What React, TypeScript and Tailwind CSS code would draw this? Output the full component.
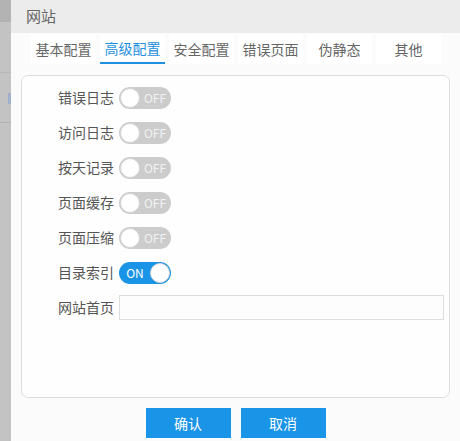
import { useState } from "react";

const tabs = ["基本配置", "高级配置", "安全配置", "错误页面", "伪静态", "其他"];

const switches = [
  { label: "错误日志", on: false },
  { label: "访问日志", on: false },
  { label: "按天记录", on: false },
  { label: "页面缓存", on: false },
  { label: "页面压缩", on: false },
  { label: "目录索引", on: true },
];

function Toggle({ on, onClick }: { on: boolean; onClick: () => void }) {
  return (
    <button
      onClick={onClick}
      className={`flex h-[22px] w-[52px] items-center rounded-full px-[1px] ${
        on ? "flex-row-reverse bg-[#1a94e6]" : "bg-[#cccccc]"
      }`}
    >
      <span className="h-[20px] w-[20px] shrink-0 rounded-full border border-[#d4d4d4] bg-white" />
      <span
        className={`flex-1 text-center text-[12px] leading-none ${
          on ? "text-white" : "text-[#f2f2f2]"
        }`}
      >
        {on ? "ON" : "OFF"}
      </span>
    </button>
  );
}

export default function App() {
  const [active] = useState(1);
  const [state, setState] = useState(switches.map((s) => s.on));

  return (
    <div
      className="flex h-[441px] w-[460px] overflow-hidden bg-[#fbfbfb] text-[14px] text-[#555]"
      style={{ fontFamily: '"Noto Sans CJK SC", "Noto Sans", sans-serif' }}
    >
      {/* backdrop strip on the left */}
      <div className="flex w-[11px] shrink-0 flex-col bg-[#c3c3c3]">
        <div className="h-[22px] bg-[#b3b3b3]" />
        <div className="mt-[50px] h-px bg-[#b8b8b8]" />
        <div className="mt-[20px] ml-[8px] h-[11px] w-[3px] bg-[#9fb0c8]" />
        <div className="mt-[18px] h-px bg-[#b0b0b0]" />
      </div>

      <div className="flex flex-1 flex-col">
        <div className="flex h-[33px] items-center bg-[#ececec] pl-[15px] text-[15px] text-[#666]">
          网站
        </div>

        <div className="flex h-[35px] gap-[4px] pl-[20px] pt-[1px]">
          {tabs.map((t, i) => (
            <div
              key={t}
              className={`flex h-[30px] w-[65px] items-center justify-center bg-white ${
                i === active
                  ? "border-b-2 border-[#1e90e0] text-[#1e90e0]"
                  : "text-[#666]"
              }`}
            >
              {t}
            </div>
          ))}
        </div>

        <div className="mx-[10px] mt-[7px] flex h-[323px] flex-col rounded-[7px] border border-[#dddddd] bg-[#fefefe] pt-[4px]">
          {switches.map((s, i) => (
            <div key={s.label} className="flex h-[35px] items-center gap-[5px]">
              <span className="w-[92px] text-right">{s.label}</span>
              <Toggle
                on={state[i]}
                onClick={() =>
                  setState((prev) => prev.map((v, j) => (j === i ? !v : v)))
                }
              />
            </div>
          ))}
          <div className="flex h-[35px] items-center gap-[5px] pr-[5px]">
            <span className="w-[92px] text-right">网站首页</span>
            <input className="h-[25px] flex-1 border border-[#dddddd] bg-[#fdfdfd] px-2 text-[13px] outline-none" />
          </div>
        </div>

        <div className="mt-[10px] flex justify-center gap-[10px]">
          <button className="h-[30px] w-[85px] bg-[#1a94e6] text-white">确认</button>
          <button className="h-[30px] w-[85px] bg-[#1a94e6] text-white">取消</button>
        </div>
      </div>
    </div>
  );
}
